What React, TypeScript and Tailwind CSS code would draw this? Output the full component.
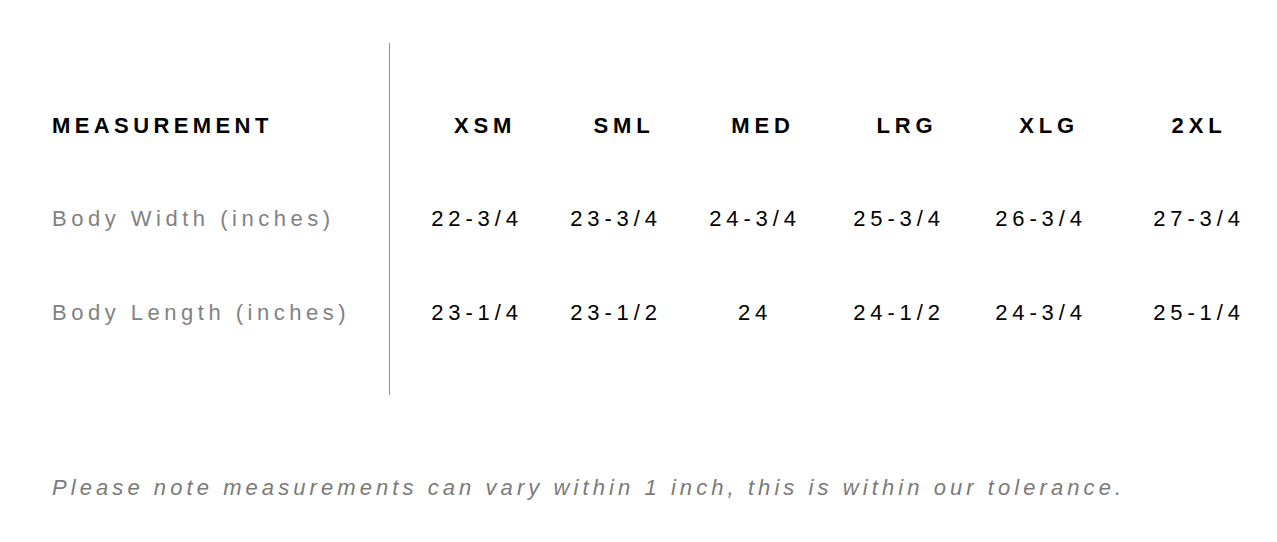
import React from 'react';

const sizes = ['XSM', 'SML', 'MED', 'LRG', 'XLG', '2XL'];

const rows = [
  { label: 'Body Width (inches)', values: ['22-3/4', '23-3/4', '24-3/4', '25-3/4', '26-3/4', '27-3/4'] },
  { label: 'Body Length (inches)', values: ['23-1/4', '23-1/2', '24', '24-1/2', '24-3/4', '25-1/4'] },
];

// widths of the size columns, left to right (last one is nudged right a bit)
const colWidths = ['w-[140px]', 'w-[138px]', 'w-[140px]', 'w-[148px]', 'w-[136px]', 'w-[156px] pl-[24px]'];

const SizeChart = () => {
  return (
    <div className="w-[1277px] h-[542px] overflow-hidden bg-white font-['Liberation_Sans',Arial,sans-serif] pt-[43px]">
      <div className="flex">
        <div className="w-[389px] shrink-0 pl-[52px] pt-[37px]">
          <div className="h-[91px] flex items-center text-[22px] font-bold tracking-[0.2em] text-black">
            MEASUREMENT
          </div>
          {rows.map((row) => (
            <div key={row.label} className="h-[94px] flex items-center text-[22px] tracking-[0.205em] text-[#828282]">
              {row.label}
            </div>
          ))}
        </div>

        <div className="w-px h-[352px] bg-[#8f8f8f] shrink-0" />

        <div className="pl-[17px] pt-[37px]">
          <div className="flex h-[91px] items-center">
            {sizes.map((s, i) => (
              <div
                key={s}
                className={`${colWidths[i]} ${i < 5 ? 'pl-4' : ''} text-center text-[22px] font-bold tracking-[0.22em] text-black`}
              >
                {s}
              </div>
            ))}
          </div>
          {rows.map((row) => (
            <div key={row.label} className="flex h-[94px] items-center">
              {row.values.map((v, i) => (
                <div key={i} className={`${colWidths[i]} text-center text-[22px] tracking-[0.22em] text-black`}>
                  {v}
                </div>
              ))}
            </div>
          ))}
        </div>
      </div>

      <p className="mt-[78px] pl-[52px] text-[22px] italic tracking-[0.185em] text-[#7a7a7a] leading-[30px]">
        Please note measurements can vary within 1 inch, this is within our tolerance.
      </p>
    </div>
  );
};

export default SizeChart;
